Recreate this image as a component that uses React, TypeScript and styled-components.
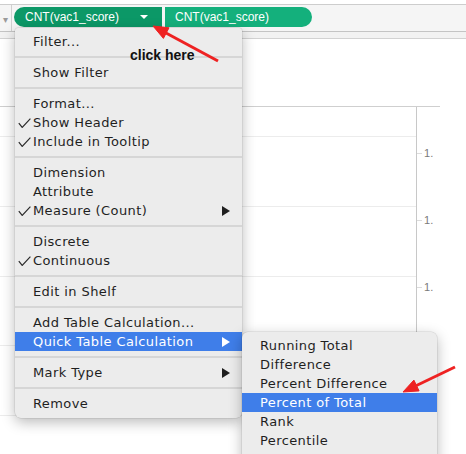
import React from 'react';
import styled, { createGlobalStyle } from 'styled-components';

const GlobalStyle = createGlobalStyle`
  html, body {
    margin: 0;
    padding: 0;
    background: #ffffff;
  }
  #root {
    width: 466px;
    height: 454px;
  }
`;

type MenuEntry =
  | { kind: 'sep' }
  | { kind: 'item'; label: string; checked?: boolean; submenu?: boolean; active?: boolean };

const mainMenu: MenuEntry[] = [
  { kind: 'item', label: 'Filter...' },
  { kind: 'sep' },
  { kind: 'item', label: 'Show Filter' },
  { kind: 'sep' },
  { kind: 'item', label: 'Format...' },
  { kind: 'item', label: 'Show Header', checked: true },
  { kind: 'item', label: 'Include in Tooltip', checked: true },
  { kind: 'sep' },
  { kind: 'item', label: 'Dimension' },
  { kind: 'item', label: 'Attribute' },
  { kind: 'item', label: 'Measure (Count)', checked: true, submenu: true },
  { kind: 'sep' },
  { kind: 'item', label: 'Discrete' },
  { kind: 'item', label: 'Continuous', checked: true },
  { kind: 'sep' },
  { kind: 'item', label: 'Edit in Shelf' },
  { kind: 'sep' },
  { kind: 'item', label: 'Add Table Calculation...' },
  { kind: 'item', label: 'Quick Table Calculation', submenu: true, active: true },
  { kind: 'sep' },
  { kind: 'item', label: 'Mark Type', submenu: true },
  { kind: 'sep' },
  { kind: 'item', label: 'Remove' },
];

const quickCalcs = [
  'Running Total',
  'Difference',
  'Percent Difference',
  'Percent of Total',
  'Rank',
  'Percentile',
];

const rowHeights = [29, 69, 69, 68, 69, 60];
const ticks = ['1.', '1.', '1.'];

const App = () => {
  return (
    <>
      <GlobalStyle />
      <Page>
        <ShelfBar>
          <ShelfStub>▾</ShelfStub>
          <PillRow>
            <Pill $active>
              CNT(vac1_score)
              <PillCaret />
            </Pill>
            <Pill $last>CNT(vac1_score)</Pill>
          </PillRow>
        </ShelfBar>
        <HeaderStrip />
        <ChartHead />
        <ChartBody>
          <Pane>
            {rowHeights.map((h, i) => (
              <PaneRow key={i} $h={h} $first={i === 0} />
            ))}
          </Pane>
          <Axis>
            {ticks.map((t, i) => (
              <Tick key={i}>
                <TickMark />
                <TickLabel>{t}</TickLabel>
              </Tick>
            ))}
          </Axis>
        </ChartBody>

        <Menu>
          {mainMenu.map((entry, i) =>
            entry.kind === 'sep' ? (
              <Separator key={i} />
            ) : (
              <MenuItem key={i} $active={entry.active}>
                <Check>
                  {entry.checked && (
                    <CheckMark viewBox="0 0 13 10">
                      <path d="M0.8 5.2 L4.2 9.4 L12.4 0.6" />
                    </CheckMark>
                  )}
                </Check>
                <ItemLabel>{entry.label}</ItemLabel>
                {entry.submenu && (
                  <SubArrow viewBox="0 0 8 10" $active={entry.active}>
                    <polygon points="0,0 8,5 0,10" />
                  </SubArrow>
                )}
              </MenuItem>
            )
          )}
        </Menu>

        <SubMenu>
          {quickCalcs.map((label) => (
            <MenuItem key={label} $active={label === 'Percent of Total'}>
              <Check />
              <ItemLabel>{label}</ItemLabel>
            </MenuItem>
          ))}
        </SubMenu>

        <Callout>click here</Callout>

        <Arrows viewBox="0 0 466 454">
          <line x1="218" y1="61" x2="166" y2="33" />
          <polygon points="153,26 169,27.8 163.4,38.4" />
          <line x1="455" y1="367" x2="416.5" y2="385.5" />
          <polygon points="403,392 419.1,390.9 413.9,380.1" />
        </Arrows>
      </Page>
    </>
  );
};

const Page = styled.div`
  position: relative;
  width: 466px;
  height: 454px;
  overflow: hidden;
  background: #ffffff;
  font-family: 'DejaVu Sans', 'Liberation Sans', sans-serif;
  display: flex;
  flex-direction: column;
`;

const ShelfBar = styled.div`
  flex-shrink: 0;
  margin-top: 4px;
  height: 26px;
  display: flex;
  background: #f5f5f5;
  border-top: 1px solid #cdcdcd;
  border-bottom: 1px solid #c4c4c4;
`;

const ShelfStub = styled.div`
  width: 12px;
  border-right: 1px solid #d0d0d0;
  color: #9a9a9a;
  font-size: 10px;
  display: flex;
  align-items: center;
  justify-content: center;
  padding-top: 2px;
  box-sizing: border-box;
`;

const PillRow = styled.div`
  display: flex;
  gap: 3px;
  padding: 2px 0 0 2px;
`;

const Pill = styled.div<{ $active?: boolean; $last?: boolean }>`
  position: relative;
  width: ${(p) => (p.$active ? 148 : 147)}px;
  height: 20px;
  box-sizing: border-box;
  padding-left: ${(p) => (p.$active ? 11 : 10)}px;
  display: flex;
  align-items: center;
  background: ${(p) => (p.$active ? '#0c9867' : '#14b07c')};
  color: #ffffff;
  font-family: 'Liberation Sans', Arial, sans-serif;
  font-size: 12px;
  border-radius: ${(p) => (p.$last ? '0 10px 10px 0' : '10px 0 0 10px')};
`;

const PillCaret = styled.span`
  position: absolute;
  right: 14px;
  top: 8px;
  width: 0;
  height: 0;
  border-left: 4px solid transparent;
  border-right: 4px solid transparent;
  border-top: 4px solid #ffffff;
`;

const HeaderStrip = styled.div`
  flex-shrink: 0;
  height: 6px;
  background: #f2f2f2;
  border-bottom: 1px solid #d2d2d2;
`;

const ChartHead = styled.div`
  flex-shrink: 0;
  height: 67px;
`;

const ChartBody = styled.div`
  flex: 1;
  min-height: 0;
  overflow: hidden;
  display: flex;
  width: 440px;
  border-top: 1px solid #cfcfcf;
`;

const Pane = styled.div`
  width: 417px;
  display: flex;
  flex-direction: column;
`;

const PaneRow = styled.div<{ $h: number; $first?: boolean }>`
  height: ${(p) => p.$h}px;
  flex-shrink: 0;
  border-top: ${(p) => (p.$first ? 'none' : '1px solid #ececec')};
`;

const Axis = styled.div`
  width: 23px;
  border-left: 1px solid #c8c8c8;
  display: flex;
  flex-direction: column;
  gap: 53px;
  padding-top: 39px;
`;

const Tick = styled.div`
  height: 14px;
  display: flex;
  align-items: center;
  gap: 2px;
`;

const TickMark = styled.div`
  width: 5px;
  height: 1px;
  background: #dcdcdc;
`;

const TickLabel = styled.span`
  font-family: 'Liberation Sans', Arial, sans-serif;
  font-size: 11px;
  color: #7a7a7a;
`;

const Menu = styled.div`
  position: absolute;
  left: 15px;
  top: 28px;
  width: 227px;
  padding: 4px 0 5px;
  background: #ececec;
  border-radius: 3px 3px 6px 6px;
  box-shadow: 0 4px 14px rgba(0, 0, 0, 0.28), 0 0 0 0.5px rgba(0, 0, 0, 0.12);
`;

const SubMenu = styled.div`
  position: absolute;
  left: 242px;
  top: 332px;
  width: 195px;
  height: 140px;
  padding-top: 4px;
  box-sizing: border-box;
  background: #ececec;
  border-radius: 6px;
  box-shadow: 0 4px 14px rgba(0, 0, 0, 0.28), 0 0 0 0.5px rgba(0, 0, 0, 0.12);
`;

const MenuItem = styled.div<{ $active?: boolean }>`
  height: 19px;
  display: flex;
  align-items: center;
  background: ${(p) => (p.$active ? '#3f7ee9' : 'transparent')};
  color: ${(p) => (p.$active ? '#ffffff' : '#1f1f1f')};
  font-size: 13px;
  letter-spacing: 0.4px;
`;

const Check = styled.span`
  width: 18px;
  height: 19px;
  padding: 5px 0 0 3px;
  box-sizing: border-box;
  display: flex;
  align-items: flex-start;
`;

const CheckMark = styled.svg`
  width: 13px;
  height: 10px;
  fill: none;
  stroke: #2a2a2a;
  stroke-width: 1.2;
`;

const ItemLabel = styled.span`
  flex: 1;
  white-space: nowrap;
`;

const SubArrow = styled.svg<{ $active?: boolean }>`
  width: 8px;
  height: 10px;
  margin-right: 12px;
  fill: ${(p) => (p.$active ? '#ffffff' : '#1f1f1f')};
`;

const Separator = styled.div`
  height: 12px;
  display: flex;
  align-items: center;

  &::after {
    content: '';
    flex: 1;
    height: 2px;
    background: #d6d6d6;
  }
`;

const Callout = styled.div`
  position: absolute;
  left: 130px;
  top: 47px;
  font-family: 'Liberation Sans', Arial, sans-serif;
  font-weight: bold;
  font-size: 14px;
  color: #111111;
`;

const Arrows = styled.svg`
  position: absolute;
  left: 0;
  top: 0;
  width: 466px;
  height: 454px;
  pointer-events: none;
  fill: #ee2222;
  stroke: #ee2222;

  line {
    stroke-width: 3;
  }
  polygon {
    stroke-width: 1;
    stroke-linejoin: round;
  }
`;

export default App;
